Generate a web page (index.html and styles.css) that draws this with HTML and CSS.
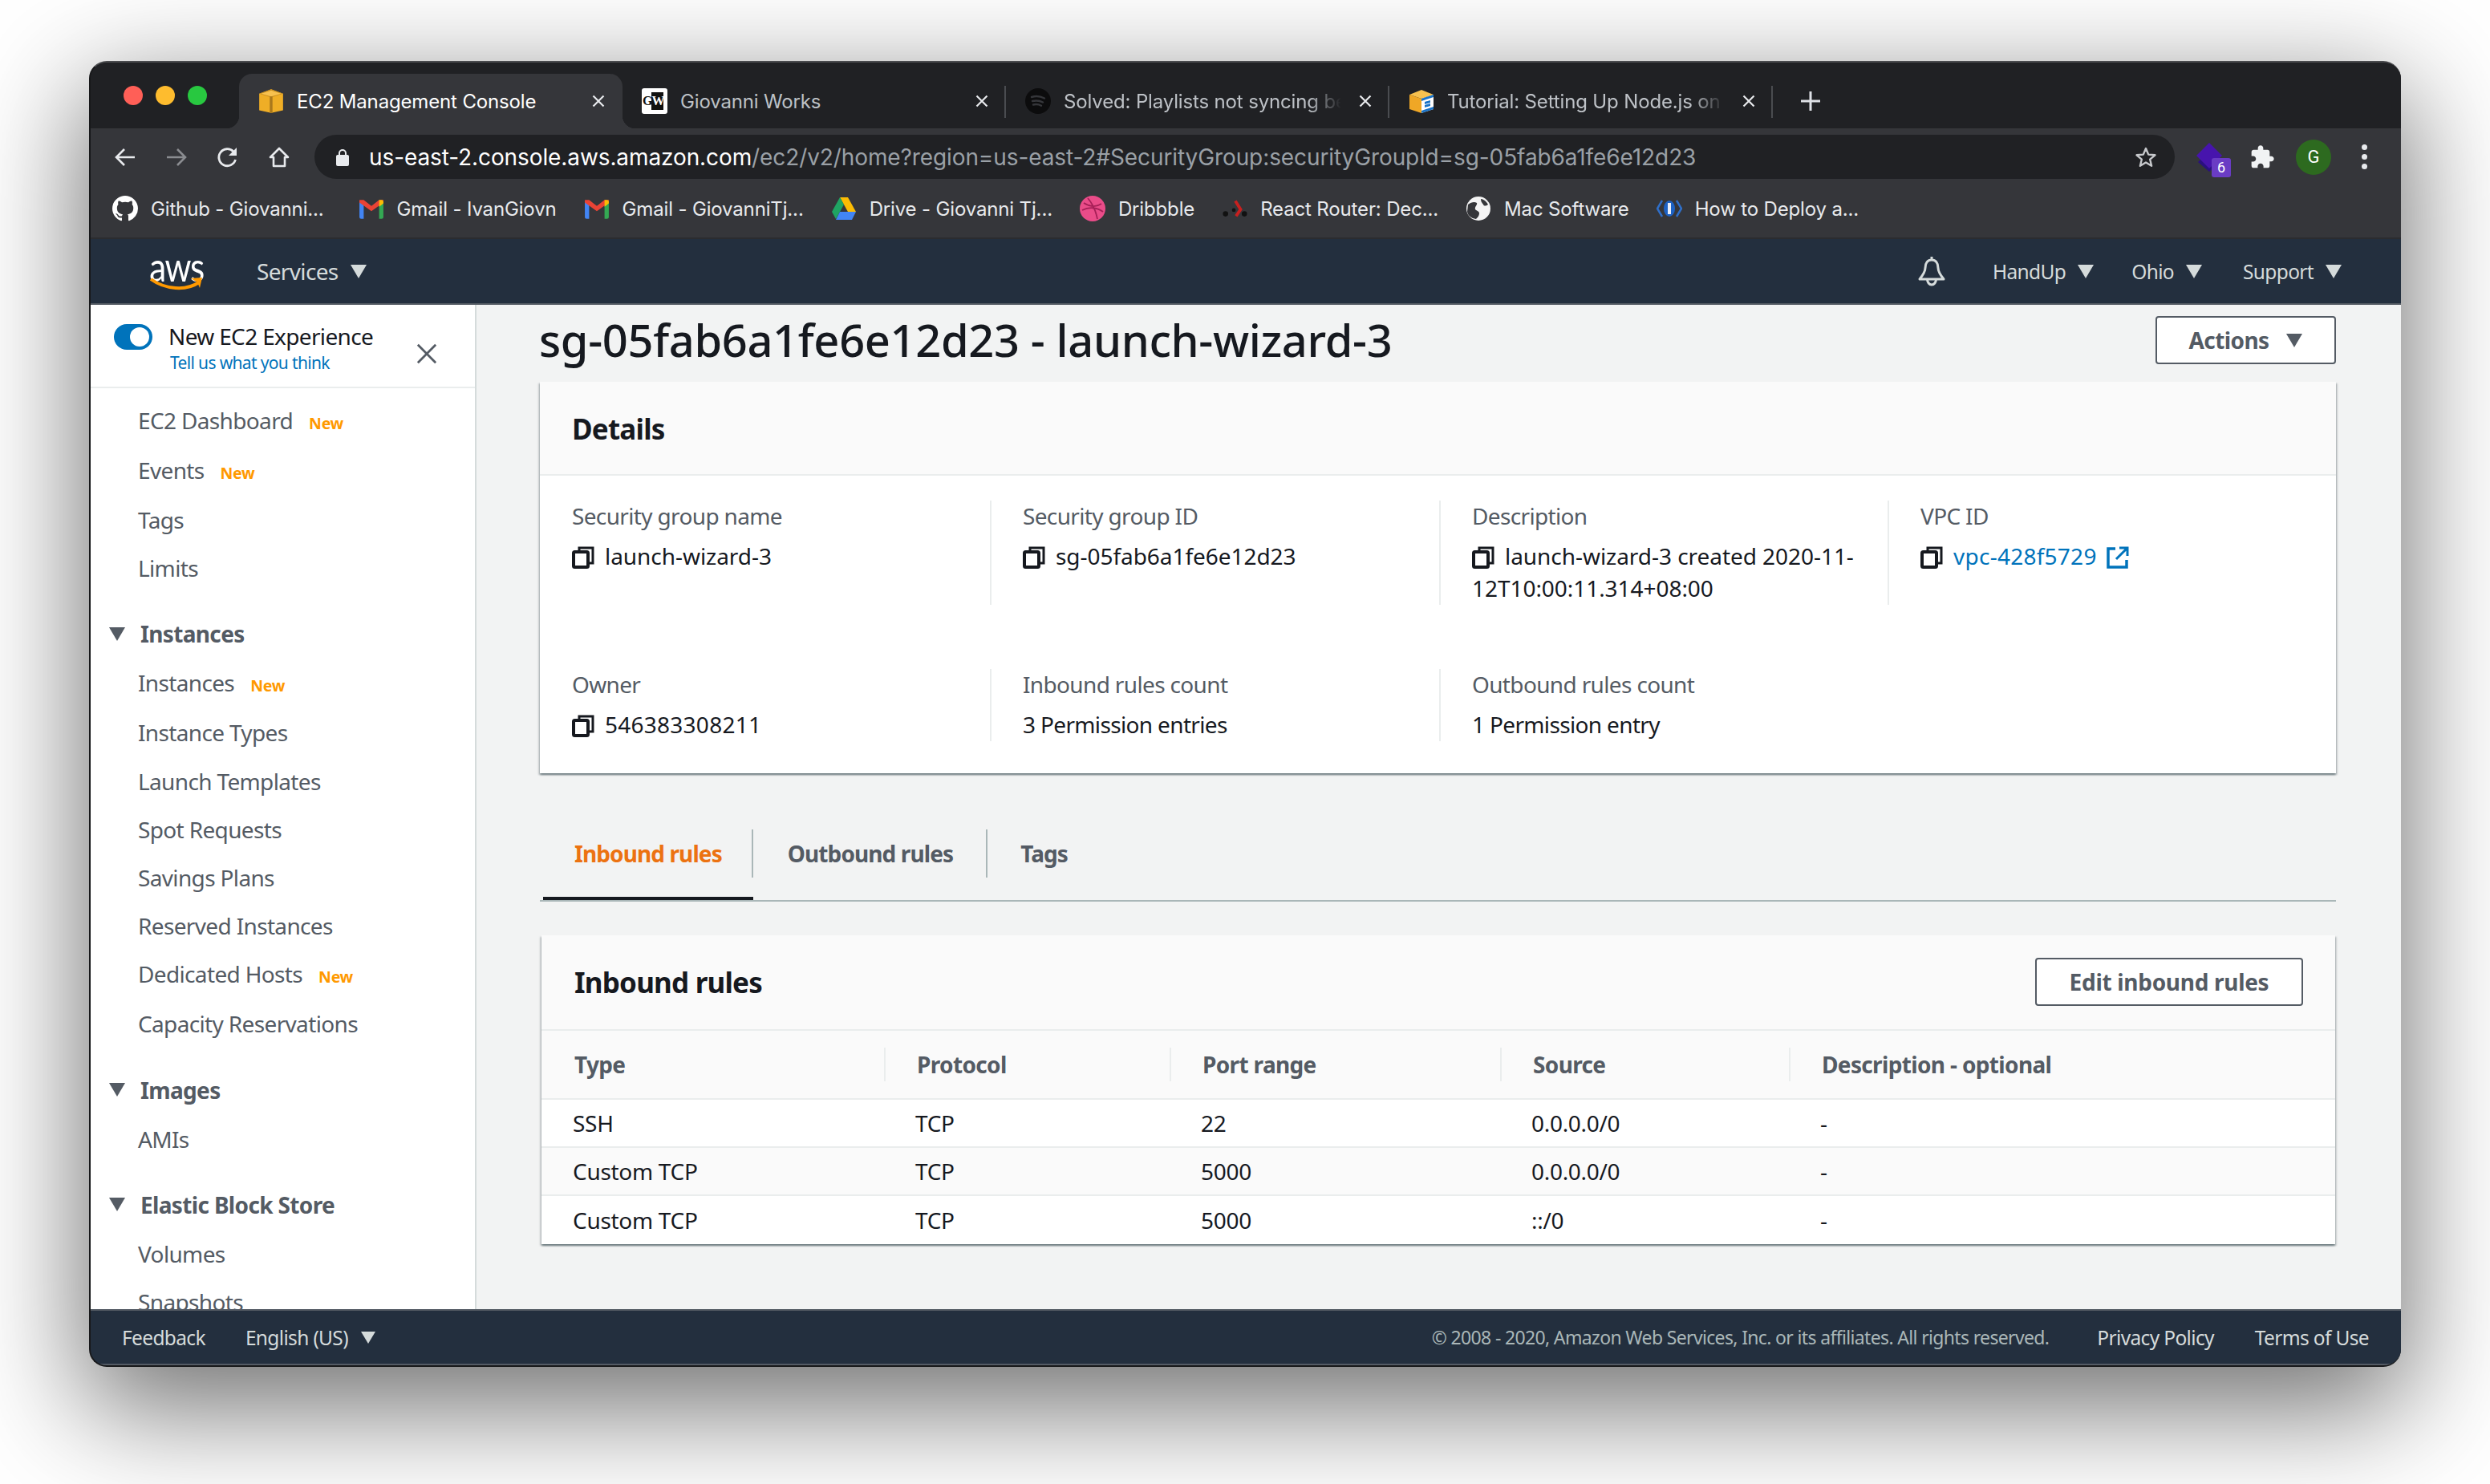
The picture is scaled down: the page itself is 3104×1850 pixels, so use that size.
FILE: index.html
```html
<!DOCTYPE html>
<html lang="en">
<head>
    <meta charset="UTF-8">
    <title>EC2 Management Console</title>
    <link rel="stylesheet" href="styles.css">
</head>
<body>
    <svg class="sprites" width="0" height="0">
        <symbol id="copy" viewBox="0 0 28 28">
            <path d="M9 5V2h17v19h-4" fill="none" stroke="#16191f" stroke-width="3"/>
            <rect x="2" y="7" width="18" height="19" rx="1.5" fill="none" stroke="#16191f" stroke-width="4"/>
        </symbol>
        <symbol id="close" viewBox="0 0 16 16">
            <path d="M1.5 1.5l13 13M14.5 1.5l-13 13" fill="none" stroke="#e8eaed" stroke-width="2.2"/>
        </symbol>
        <symbol id="awsbox" viewBox="0 0 28 28">
            <path d="M1 6l13-5 13 5v18l-13 3-13-3z" fill="#efae26"/>
            <path d="M1 6l13-5 13 5-13 4z" fill="#c98f1f"/>
            <path d="M3 6l11-3.500L25 6l-11 3z" fill="#f7c14f"/>
            <path d="M12.500 9h3v18h-3z" fill="#a9781c"/>
        </symbol>
        <symbol id="gmail" viewBox="0 0 30 28">
            <path d="M1 26V5l5 3v18H3a2 2 0 0 1-2-2z" fill="#4285f4"/>
            <path d="M29 26V5l-5 3v18h3a2 2 0 0 0 2-2z" fill="#34a853"/>
            <path d="M1 7l14 10L29 7V4l-5 0-9 7-9-7H1z" fill="#ea4335"/>
            <path d="M24 4h3a2 2 0 0 1 2 2v2l-5 4z" fill="#fbbc04"/>
        </symbol>
    </svg>

    <div class="window">
        <div class="tabstrip">
            <div class="lights">
                <span class="light red"></span>
                <span class="light yellow"></span>
                <span class="light green"></span>
            </div>
            <div class="tab active">
                <svg class="favicon" viewBox="0 0 28 28"><use href="#awsbox"/></svg>
                <span class="tab-title">EC2 Management Console</span>
                <svg class="tab-close"><use href="#close"/></svg>
            </div>
            <div class="tab">
                <span class="favicon gw"><span class="gw-g">G</span><span class="gw-w">W</span></span>
                <span class="tab-title">Giovanni Works</span>
                <svg class="tab-close"><use href="#close"/></svg>
            </div>
            <div class="tab">
                <svg class="favicon" viewBox="0 0 32 32">
                    <circle cx="16" cy="16" r="16" fill="#0c0c0d"/>
                    <path d="M8 11c5-1.500 11-1 16 1.500M9 16c4.500-1 9-.7 13 1.500M10 20.500c3.500-.8 7-.5 10 1.200" fill="none" stroke="#35363a" stroke-width="2.400" stroke-linecap="round"/>
                </svg>
                <span class="tab-title fade">Solved: Playlists not syncing between devices</span>
                <svg class="tab-close"><use href="#close"/></svg>
            </div>
            <div class="tab">
                <svg class="favicon" viewBox="0 0 32 32">
                    <path d="M1 8l15-6 15 6-15 5z" fill="#f7c14f"/>
                    <path d="M1 8l15 5v18L1 26z" fill="#efa726"/>
                    <path d="M16 13l15-5v18l-15 5z" fill="#fff"/>
                    <path d="M16 13l15-5v3l-15 5zM16 28l15-5v3l-15 5zM20 17l7-2v3l-7 2zM20 21l7-2v3l-7 2z" fill="#1a73c7"/>
                </svg>
                <span class="tab-title fade">Tutorial: Setting Up Node.js on an EC2</span>
                <svg class="tab-close"><use href="#close"/></svg>
            </div>
            <svg class="new-tab" viewBox="0 0 26 26"><path d="M13 1v24M1 13h24" stroke="#dee1e6" stroke-width="3"/></svg>
        </div>

        <div class="toolbar">
            <svg class="tool" viewBox="0 0 28 28"><path d="M26 14H4M13 4L3 14l10 10" fill="none" stroke="#e8eaed" stroke-width="2.600"/></svg>
            <svg class="tool" viewBox="0 0 28 28"><path d="M2 14h22M15 4l10 10-10 10" fill="none" stroke="#8a8c90" stroke-width="2.600"/></svg>
            <svg class="tool" viewBox="0 0 28 28"><path d="M23.500 17a10.500 10.500 0 1 1-2.500-10" fill="none" stroke="#e8eaed" stroke-width="2.800"/><path d="M25 2v10H15z" fill="#e8eaed"/></svg>
            <svg class="tool" viewBox="0 0 28 28"><path d="M14 3L3 14h4v11h14V14h4z" fill="none" stroke="#e8eaed" stroke-width="2.600" stroke-linejoin="round"/></svg>
            <div class="omnibox">
                <svg class="lock" viewBox="0 0 16 22"><path d="M4 9V6a4 4 0 0 1 8 0v3" fill="none" stroke="#e8eaed" stroke-width="2"/><rect y="8" width="16" height="14" rx="2" fill="#e8eaed"/></svg>
                <span class="url"><b>us-east-2.console.aws.amazon.com</b>/ec2/v2/home?region=us-east-2#SecurityGroup:securityGroupId=sg-05fab6a1fe6e12d23</span>
                <svg class="star" viewBox="0 0 28 28"><path d="M14 3l3.200 7.600 8.300.7-6.300 5.400 1.900 8.100-7.100-4.300-7.100 4.300 1.900-8.100-6.300-5.400 8.300-.7z" fill="none" stroke="#c6c8cb" stroke-width="2.400" stroke-linejoin="round"/></svg>
            </div>
            <div class="extension">
                <svg class="ext-mark" viewBox="0 0 34 36"><path d="M17 10l14 14-14 12L3 24z" fill="#2a1080"/><path d="M17 0l16 16-16 16L1 16z" fill="#4714ad"/></svg>
                <span class="ext-badge">6</span>
            </div>
            <svg class="puzzle" viewBox="0 0 24 24"><path d="M20.500 11H19V7c0-1.100-.9-2-2-2h-4V3.500C13 2.120 11.880 1 10.500 1S8 2.120 8 3.500V5H4c-1.100 0-1.990.9-1.990 2v3.800H3.500c1.490 0 2.700 1.210 2.700 2.700s-1.210 2.700-2.700 2.700H2V20c0 1.100.9 2 2 2h3.800v-1.500c0-1.490 1.210-2.700 2.700-2.700 1.490 0 2.700 1.210 2.700 2.700V22H17c1.100 0 2-.9 2-2v-4h1.500c1.380 0 2.500-1.120 2.500-2.500S21.880 11 20.500 11z" fill="#f1f3f4"/></svg>
            <span class="avatar">G</span>
            <span class="kebab"><i></i><i></i><i></i></span>
        </div>

        <div class="bookmarks">
            <a class="bookmark">
                <svg class="bm-icon" viewBox="0 0 16 16"><path fill="#fff" d="M8 0C3.580 0 0 3.580 0 8c0 3.540 2.290 6.530 5.470 7.590.4.070.55-.17.55-.38 0-.19-.01-.82-.01-1.490-2.010.37-2.530-.49-2.690-.94-.09-.23-.48-.94-.82-1.130-.28-.15-.68-.52-.01-.53.63-.01 1.080.58 1.230.82.72 1.210 1.870.87 2.330.66.070-.52.28-.87.51-1.070-1.780-.2-3.640-.89-3.640-3.950 0-.87.31-1.590.82-2.150-.08-.2-.36-1.020.08-2.120 0 0 .67-.21 2.200.82.64-.18 1.320-.27 2-.27.68 0 1.360.09 2 .27 1.530-1.040 2.200-.82 2.200-.82.44 1.100.16 1.920.08 2.120.51.56.82 1.270.82 2.150 0 3.070-1.870 3.750-3.650 3.950.29.25.54.73.54 1.480 0 1.070-.01 1.930-.01 2.200 0 .21.15.46.55.38A8.013 8.013 0 0 0 16 8c0-4.420-3.580-8-8-8z"/></svg>
                Github - Giovanni...
            </a>
            <a class="bookmark"><svg class="bm-icon" viewBox="0 0 30 28"><use href="#gmail"/></svg>Gmail - IvanGiovn</a>
            <a class="bookmark"><svg class="bm-icon" viewBox="0 0 30 28"><use href="#gmail"/></svg>Gmail - GiovanniTj...</a>
            <a class="bookmark">
                <svg class="bm-icon" viewBox="0 0 32 30">
                    <path d="M11 1h10l10 18H21z" fill="#fbbc04"/>
                    <path d="M11 1l5 9-10 18L1 19z" fill="#1fa463"/>
                    <path d="M11 19h20l-5 10H6z" fill="#4285f4"/>
                </svg>
                Drive - Giovanni Tj...
            </a>
            <a class="bookmark">
                <svg class="bm-icon" viewBox="0 0 32 32">
                    <circle cx="16" cy="16" r="16" fill="#ea4c89"/>
                    <path d="M5 9c8 5 16 5 22 1M3 18c8-4 18-4 26 2M10 3c6 7 10 16 12 26" fill="none" stroke="#a51f57" stroke-width="1.800"/>
                </svg>
                Dribbble
            </a>
            <a class="bookmark">
                <svg class="bm-icon" viewBox="0 0 34 30">
                    <circle cx="5" cy="22" r="3.500" fill="#111"/>
                    <circle cx="30" cy="22" r="3.500" fill="#111"/>
                    <circle cx="16" cy="17" r="2.500" fill="#111"/>
                    <path d="M18 5l7 11-6 9" fill="none" stroke="#c8201f" stroke-width="4"/>
                </svg>
                React Router: Dec...
            </a>
            <a class="bookmark">
                <svg class="bm-icon" viewBox="0 0 32 32">
                    <circle cx="16" cy="16" r="15" fill="#f4f4f4"/>
                    <path d="M3 11c4-3 8-4 11-2 1 3-3 4-2 8 2 2 5 2 5 5s-2 5-4 7c-6-1-10-4-11-9zM19 4c3 0 7 3 9 7-3 2-5 2-6 0s-3-3-3-7z" fill="#35363a"/>
                </svg>
                Mac Software
            </a>
            <a class="bookmark">
                <svg class="bm-icon" viewBox="0 0 32 30">
                    <path d="M7 5L1 15l6 10M25 5l6 10-6 10" fill="none" stroke="#2f6fc9" stroke-width="2.500"/>
                    <ellipse cx="16" cy="15" rx="7" ry="10" fill="#1d62c4"/>
                    <path d="M14 8h4v14h-4z" fill="#e9eef8"/>
                </svg>
                How to Deploy a...
            </a>
        </div>

        <header class="topnav">
            <div class="aws-logo">
                <span class="aws-word">aws</span>
                <svg class="aws-smile" viewBox="0 0 68 20"><path d="M2 3c18 13 44 15 60 4" fill="none" stroke="#f90" stroke-width="4"/><path d="M52 2l14-1-3 13-3-7z" fill="#f90"/></svg>
            </div>
            <a class="nav-link services">Services<span class="caret"></span></a>
            <svg class="bell" viewBox="0 0 36 38">
                <path d="M18 5c-5 0-8 4-8 10 0 5-3 9-7 14h30c-4-5-7-9-7-14 0-6-3-10-8-10zM18 1v4" fill="none" stroke="#d5dbdb" stroke-width="3" stroke-linejoin="round"/>
                <path d="M12.500 29a5.500 7 0 0 0 11 0" fill="none" stroke="#d5dbdb" stroke-width="3"/>
            </svg>
            <a class="nav-link small">HandUp<span class="caret"></span></a>
            <a class="nav-link small">Ohio<span class="caret"></span></a>
            <a class="nav-link small">Support<span class="caret"></span></a>
        </header>

        <div class="console">
            <aside class="sidebar">
                <div class="experience">
                    <span class="toggle"><span class="knob"></span></span>
                    <div class="experience-text">
                        <div class="experience-title">New EC2 Experience</div>
                        <a class="experience-link">Tell us what you think</a>
                    </div>
                    <svg class="experience-close" viewBox="0 0 28 28"><path d="M2 2l24 24M26 2L2 26" stroke="#545b64" stroke-width="3"/></svg>
                </div>
                <ul class="side-list first">
                    <li class="has-new">EC2 Dashboard<span class="new">New</span></li>
                    <li class="has-new">Events<span class="new">New</span></li>
                    <li>Tags</li>
                    <li>Limits</li>
                </ul>
                <h4 class="side-head"><span class="caret"></span>Instances</h4>
                <ul class="side-list">
                    <li class="has-new">Instances<span class="new">New</span></li>
                    <li>Instance Types</li>
                    <li>Launch Templates</li>
                    <li>Spot Requests</li>
                    <li>Savings Plans</li>
                    <li>Reserved Instances</li>
                    <li class="has-new">Dedicated Hosts<span class="new">New</span></li>
                    <li>Capacity Reservations</li>
                </ul>
                <h4 class="side-head"><span class="caret"></span>Images</h4>
                <ul class="side-list">
                    <li>AMIs</li>
                </ul>
                <h4 class="side-head"><span class="caret"></span>Elastic Block Store</h4>
                <ul class="side-list">
                    <li>Volumes</li>
                    <li>Snapshots</li>
                </ul>
            </aside>

            <main class="content">
                <div class="title-row">
                    <h1>sg-05fab6a1fe6e12d23 - launch-wizard-3</h1>
                    <button class="btn actions">Actions<span class="caret"></span></button>
                </div>

                <section class="card details">
                    <div class="card-head"><h2>Details</h2></div>
                    <div class="details-grid">
                        <div class="field">
                            <div class="label">Security group name</div>
                            <div class="value"><svg class="copy"><use href="#copy"/></svg>launch-wizard-3</div>
                        </div>
                        <div class="field">
                            <div class="label">Security group ID</div>
                            <div class="value"><svg class="copy"><use href="#copy"/></svg>sg-05fab6a1fe6e12d23</div>
                        </div>
                        <div class="field">
                            <div class="label">Description</div>
                            <div class="value"><svg class="copy"><use href="#copy"/></svg>launch-wizard-3 created 2020-11-<br>12T10:00:11.314+08:00</div>
                        </div>
                        <div class="field">
                            <div class="label">VPC ID</div>
                            <div class="value digits">
                                <svg class="copy"><use href="#copy"/></svg><a class="link">vpc-428f5729</a>
                                <svg class="external" viewBox="0 0 28 28"><path d="M11 3H2v23h23v-9" fill="none" stroke="#0073bb" stroke-width="3.500"/><path d="M12 16L25 3M16 2h10v10" fill="none" stroke="#0073bb" stroke-width="3"/></svg>
                            </div>
                        </div>
                        <div class="field short">
                            <div class="label">Owner</div>
                            <div class="value digits"><svg class="copy"><use href="#copy"/></svg>546383308211</div>
                        </div>
                        <div class="field short">
                            <div class="label">Inbound rules count</div>
                            <div class="value words">3 Permission entries</div>
                        </div>
                        <div class="field short">
                            <div class="label">Outbound rules count</div>
                            <div class="value words">1 Permission entry</div>
                        </div>
                    </div>
                </section>

                <nav class="tabs">
                    <a class="tabs-item active"><span>Inbound rules</span></a>
                    <a class="tabs-item"><span>Outbound rules</span></a>
                    <a class="tabs-item"><span>Tags</span></a>
                </nav>

                <section class="card rules">
                    <div class="card-head rules-head">
                        <h2>Inbound rules</h2>
                        <button class="btn edit">Edit inbound rules</button>
                    </div>
                    <table class="rules-table">
                        <colgroup>
                            <col class="col-type">
                            <col class="col-protocol">
                            <col class="col-port">
                            <col class="col-source">
                            <col>
                        </colgroup>
                        <thead>
                            <tr>
                                <th><span>Type</span></th>
                                <th><span>Protocol</span></th>
                                <th><span>Port range</span></th>
                                <th><span>Source</span></th>
                                <th><span>Description - optional</span></th>
                            </tr>
                        </thead>
                        <tbody>
                            <tr><td>SSH</td><td>TCP</td><td>22</td><td>0.0.0.0/0</td><td>-</td></tr>
                            <tr><td>Custom TCP</td><td>TCP</td><td>5000</td><td>0.0.0.0/0</td><td>-</td></tr>
                            <tr><td>Custom TCP</td><td>TCP</td><td>5000</td><td>::/0</td><td>-</td></tr>
                        </tbody>
                    </table>
                </section>
            </main>
        </div>

        <footer class="footer">
            <a class="foot-link">Feedback</a>
            <a class="foot-lang">English (US)<span class="caret"></span></a>
            <span class="copyright">© 2008 - 2020, Amazon Web Services, Inc. or its affiliates. All rights reserved.</span>
            <a class="foot-link privacy">Privacy Policy</a>
            <a class="foot-link terms">Terms of Use</a>
        </footer>
    </div>
</body>
</html>
```
FILE: styles.css
```css
html, body {
    margin: 0;
    padding: 0;
}
body {
    width: 3104px;
    height: 1850px;
    overflow: hidden;
    background: #fff;
    font-family: "Noto Sans", sans-serif;
    font-size: 28px;
    letter-spacing: -0.65px;
    color: #16191f;
}
.sprites {
    display: block;
}
.window {
    box-sizing: border-box;
    width: 2882px;
    height: 1628px;
    margin: 76px 0 0 111px;
    border: 2px solid #17181a;
    border-top-color: #4a4b4e;
    border-right: none;
    border-radius: 22px;
    overflow: hidden;
    display: flex;
    flex-direction: column;
    background: #202124;
    box-shadow: 0 44px 140px 8px rgba(0, 0, 0, 0.56);
}

/* browser chrome */
.tabstrip {
    height: 82px;
    flex: none;
    display: flex;
    background: #202124;
    font-family: Inter, sans-serif;
    font-size: 24px;
    letter-spacing: -0.15px;
}
.lights {
    width: 185px;
    flex: none;
    box-sizing: border-box;
    padding: 29px 0 0 41px;
    display: flex;
    gap: 16px;
}
.light {
    width: 24px;
    height: 24px;
    border-radius: 50%;
}
.light.red { background: #ff5f57; }
.light.yellow { background: #febc2e; }
.light.green { background: #28c840; }
.tab {
    position: relative;
    box-sizing: border-box;
    width: 478px;
    height: 68px;
    margin-top: 14px;
    padding: 0 22px 0 24px;
    display: flex;
    align-items: center;
    color: #bdc1c6;
}
.tab::after {
    content: "";
    position: absolute;
    right: 0;
    top: 15px;
    width: 2px;
    height: 40px;
    background: #4a4c50;
}
.tab.active {
    background: #35363a;
    border-radius: 16px 16px 0 0;
    color: #fff;
}
.tab.active::after {
    display: none;
}
.tab.active::before {
    content: "";
    position: absolute;
    left: -16px;
    right: -16px;
    bottom: 0;
    height: 16px;
    z-index: 0;
    background:
        radial-gradient(circle at 0 0, transparent 16px, #35363a 16.500px) left bottom / 16px 16px no-repeat,
        radial-gradient(circle at 100% 0, transparent 16px, #35363a 16.500px) right bottom / 16px 16px no-repeat;
}
.favicon {
    width: 32px;
    height: 32px;
    flex: none;
    margin-right: 16px;
}
.gw {
    width: 32px;
    background: #fff;
    border-radius: 3px;
    display: flex;
    align-items: center;
    font-family: "Liberation Serif", serif;
    font-size: 16px;
    font-weight: 700;
    letter-spacing: -1px;
    line-height: 22px;
    overflow: hidden;
}
.gw-g { color: #111; padding-left: 1px; }
.gw-w { color: #fff; background: #111; }
.tab-title {
    flex: 1;
    min-width: 0;
    white-space: nowrap;
    overflow: hidden;
}
.tab-title.fade {
    -webkit-mask-image: linear-gradient(to right, #000 88%, transparent 100%);
    mask-image: linear-gradient(to right, #000 88%, transparent 100%);
}
.tab-close {
    width: 16px;
    height: 16px;
    flex: none;
    margin-left: 22px;
}
.new-tab {
    width: 26px;
    height: 26px;
    margin: 35px 0 0 34px;
}
.toolbar {
    height: 72px;
    flex: none;
    box-sizing: border-box;
    padding: 8px 0 9px 29px;
    display: flex;
    align-items: center;
    background: #35363a;
}
.tool {
    width: 28px;
    height: 28px;
    flex: none;
    margin-right: 36px;
}
.omnibox {
    width: 2319px;
    height: 55px;
    flex: none;
    box-sizing: border-box;
    margin-left: -6px;
    padding: 0 22px 0 27px;
    display: flex;
    align-items: center;
    border-radius: 28px;
    background: #202124;
    font-family: Inter, sans-serif;
    font-size: 28px;
    letter-spacing: -0.1px;
    color: #9aa0a6;
}
.lock {
    width: 16px;
    height: 22px;
    flex: none;
    margin-right: 25px;
}
.url {
    flex: 1;
    white-space: nowrap;
}
.url b {
    font-weight: 400;
    color: #fff;
}
.star {
    width: 28px;
    height: 28px;
    flex: none;
}
.extension {
    position: relative;
    width: 34px;
    height: 36px;
    flex: none;
    margin-left: 26px;
}
.ext-mark {
    display: block;
    width: 34px;
    height: 36px;
}
.ext-badge {
    position: absolute;
    left: 20px;
    top: 19px;
    width: 24px;
    height: 24px;
    border-radius: 3px;
    background: #6a3cc4;
    color: #fff;
    font-family: Roboto, sans-serif;
    font-size: 18px;
    letter-spacing: 0;
    line-height: 24px;
    text-align: center;
}
.puzzle {
    width: 32px;
    height: 32px;
    flex: none;
    margin-left: 33px;
}
.avatar {
    width: 44px;
    height: 44px;
    flex: none;
    margin-left: 26px;
    border-radius: 50%;
    background: #2d6a1f;
    color: #fff;
    font-family: Roboto, sans-serif;
    font-size: 22px;
    letter-spacing: 0;
    line-height: 44px;
    text-align: center;
}
.kebab {
    margin-left: 38px;
    display: flex;
    flex-direction: column;
    gap: 5px;
}
.kebab i {
    width: 7px;
    height: 7px;
    border-radius: 50%;
    background: #e8eaed;
}
.bookmarks {
    height: 66px;
    flex: none;
    box-sizing: border-box;
    padding: 0 0 8px 27px;
    display: flex;
    align-items: center;
    gap: 34px;
    background: #35363a;
    font-family: Inter, sans-serif;
    font-size: 24px;
    letter-spacing: -0.15px;
    color: #e8eaed;
    border-bottom: 2px solid #2b2c2f;
}
.bookmark {
    display: flex;
    align-items: center;
    gap: 16px;
    white-space: nowrap;
}
.bookmark:first-child {
    margin-right: 9px;
}
.bm-icon {
    width: 32px;
    height: 32px;
    flex: none;
}

/* aws console */
.topnav {
    height: 82px;
    flex: none;
    box-sizing: border-box;
    padding: 0 74px 0 73px;
    display: flex;
    align-items: center;
    background: #232f3e;
    border-bottom: 2px solid #545b64;
    color: #d5dbdb;
}
.aws-logo {
    position: relative;
    width: 68px;
    height: 42px;
    flex: none;
    margin-right: 66px;
}
.aws-word {
    display: block;
    font-family: Lato, sans-serif;
    font-size: 42px;
    font-weight: 400;
    letter-spacing: -1.500px;
    line-height: 30px;
    color: #fff;
    text-align: center;
    transform: scaleY(1.2);
}
.aws-smile {
    position: absolute;
    left: 0;
    top: 28px;
    width: 68px;
    height: 20px;
}
.caret {
    display: inline-block;
    width: 0;
    height: 0;
    border-left: 10px solid transparent;
    border-right: 10px solid transparent;
    border-top: 17px solid currentColor;
}
.nav-link {
    display: flex;
    align-items: center;
    white-space: nowrap;
}
.nav-link .caret {
    margin-left: 15px;
}
.services {
    font-size: 28px;
}
.bell {
    width: 36px;
    height: 38px;
    flex: none;
    margin-left: auto;
    margin-right: 58px;
}
.nav-link.small {
    font-size: 24.500px;
    margin-right: 51px;
}
.bell + .nav-link.small {
    margin-right: 47px;
}
.nav-link.small:last-child {
    margin-right: 0;
}
.console {
    flex: 1;
    min-height: 0;
    display: flex;
}
.sidebar {
    width: 479px;
    flex: none;
    overflow: hidden;
    background: #fff;
    border-right: 2px solid #d5dbdb;
    color: #545b64;
}
.experience {
    height: 104px;
    box-sizing: border-box;
    position: relative;
    padding: 24px 0 0 29px;
    display: flex;
    border-bottom: 2px solid #eaeded;
}
.toggle {
    width: 48px;
    height: 32px;
    flex: none;
    box-sizing: border-box;
    padding: 4px 4px 4px 20px;
    border-radius: 16px;
    background: #0073bb;
}
.knob {
    display: block;
    width: 24px;
    height: 24px;
    border-radius: 50%;
    background: #fff;
}
.experience-text {
    margin: -2px 0 0 20px;
}
.experience-title {
    color: #16191f;
    line-height: 34px;
}
.experience-link {
    display: block;
    margin: 2px 0 0 2px;
    color: #0073bb;
    font-size: 21px;
    line-height: 28px;
}
.experience-close {
    position: absolute;
    left: 406px;
    top: 48px;
    width: 26px;
    height: 26px;
}
.side-list {
    list-style: none;
    margin: 0;
    padding: 0 0 0 59px;
}
.side-list.first {
    padding-top: 10px;
}
.side-list li {
    height: 60.200px;
    line-height: 60px;
    white-space: nowrap;
}
.side-list li.has-new {
    height: 62px;
}
.new {
    margin-left: 20px;
    color: #f90;
    font-size: 19.500px;
    font-weight: 700;
    letter-spacing: -0.3px;
}
.side-head {
    margin: 21px 0 0;
    height: 62px;
    padding-left: 23px;
    display: flex;
    align-items: center;
    font-size: 28px;
    font-weight: 700;
    color: #545b64;
}
.side-head .caret {
    margin-right: 19px;
}
.content {
    flex: 1;
    min-width: 0;
    box-sizing: border-box;
    padding: 14px 81px 0 79px;
    background: #f2f3f3;
}
.title-row {
    height: 82px;
    box-sizing: border-box;
    display: flex;
    justify-content: space-between;
    align-items: flex-start;
}
h1 {
    margin: -3px 0 0 -1px;
    font-size: 56px;
    font-weight: 500;
    line-height: 64px;
    letter-spacing: -0.37px;
    color: #16191f;
}
.btn {
    height: 60px;
    box-sizing: border-box;
    border: 2px solid #545b64;
    border-radius: 4px;
    background: #fff;
    color: #545b64;
    font-family: inherit;
    font-size: 28px;
    font-weight: 700;
    letter-spacing: -0.6px;
}
.actions {
    width: 225px;
    display: flex;
    align-items: center;
    justify-content: center;
}
.actions .caret {
    margin-left: 22px;
}
.edit {
    width: 334px;
    margin-top: -1px;
    letter-spacing: -0.3px;
}
.card {
    background: #fff;
    box-shadow: 0 2px 2px 0 rgba(0, 28, 36, 0.4), 2px 2px 2px 0 rgba(0, 28, 36, 0.15), -2px 2px 2px 0 rgba(0, 28, 36, 0.15);
}
.card-head {
    height: 117px;
    box-sizing: border-box;
    padding: 2px 0 0 40px;
    display: flex;
    align-items: center;
    background: #fafafa;
    border-bottom: 2px solid #eaeded;
}
h2 {
    margin: 0;
    font-size: 35px;
    font-weight: 700;
    letter-spacing: -0.8px;
    color: #16191f;
}
.details-grid {
    box-sizing: border-box;
    height: 371px;
    padding: 31px 40px 40px;
    display: grid;
    grid-template-columns: 521px 560px 559px 1fr;
    grid-template-rows: 130px 90px;
    row-gap: 80px;
}
.field {
    padding-left: 39px;
    border-left: 2px solid #eaeded;
}
.field:nth-child(4n + 1) {
    padding-left: 0;
    border-left: none;
}
.label {
    color: #545b64;
    line-height: 39px;
}
.value {
    margin-top: 10px;
    line-height: 40px;
    white-space: nowrap;
    letter-spacing: -0.05px;
}
.value.words {
    letter-spacing: -0.65px;
}
.value.digits {
    letter-spacing: 0.25px;
}
.copy {
    width: 28px;
    height: 28px;
    margin-right: 13px;
    vertical-align: -5px;
}
.link {
    color: #0073bb;
}
.external {
    width: 28px;
    height: 28px;
    margin-left: 5px;
    vertical-align: -5px;
}
.tabs {
    margin-top: 60px;
    height: 100px;
    box-sizing: border-box;
    padding-left: 4px;
    display: flex;
    border-bottom: 2px solid #aab7b8;
}
.tabs-item {
    height: 98px;
    box-sizing: border-box;
    padding-top: 10px;
    border-bottom: 4px solid transparent;
    font-weight: 700;
    letter-spacing: -0.9px;
    color: #545b64;
}
.tabs-item span {
    display: block;
    height: 60px;
    padding: 0 41px;
    line-height: 60px;
    border-right: 2px solid #aab7b8;
}
.tabs-item:last-child span {
    border-right: none;
}
.tabs-item.active {
    border-bottom-color: #16191f;
    color: #ec7211;
}
.tabs-item.active span {
    padding: 0 37px 0 39px;
}
.tabs-item:nth-child(2) span {
    padding-left: 43px;
}
.rules {
    margin: 42px 1px 0 2px;
}
.rules-head {
    height: 119px;
    padding: 0 40px 0 41px;
    justify-content: space-between;
}
.rules-table {
    width: 100%;
    table-layout: fixed;
    border-collapse: collapse;
}
.col-type { width: 427px; }
.col-protocol { width: 356px; }
.col-port { width: 412px; }
.col-source { width: 360px; }
th {
    height: 84px;
    padding: 0;
    text-align: left;
    font-weight: 700;
    color: #545b64;
    background: #fafafa;
    border-bottom: 2px solid #eaeded;
}
th span {
    display: block;
    height: 42px;
    padding-left: 39px;
    line-height: 42px;
    border-left: 2px solid #eaeded;
}
th:first-child span {
    padding-left: 41px;
    border-left: none;
}
td {
    height: 58px;
    padding: 0 0 0 39px;
    border-bottom: 2px solid #eaeded;
    letter-spacing: -0.3px;
}
tbody tr:nth-child(even) td {
    background: #fafafa;
}
tbody tr:last-child td {
    height: 60px;
    border-bottom: none;
}
.footer {
    height: 70px;
    flex: none;
    box-sizing: border-box;
    padding: 0 40px 0 39px;
    display: flex;
    align-items: center;
    background: #232f3e;
    border-top: 2px solid #545b64;
    border-bottom: 2px solid #545b64;
    color: #d5dbdb;
    font-size: 24.500px;
}
.foot-lang {
    margin-left: 50px;
    display: flex;
    align-items: center;
}
.foot-lang .caret {
    margin-left: 16px;
    border-left-width: 9px;
    border-right-width: 9px;
    border-top-width: 15px;
}
.copyright {
    margin-left: auto;
    color: #aab7b8;
    font-size: 23px;
    letter-spacing: -0.65px;
}
.privacy {
    margin-left: 60px;
}
.terms {
    margin-left: 51px;
}
```
